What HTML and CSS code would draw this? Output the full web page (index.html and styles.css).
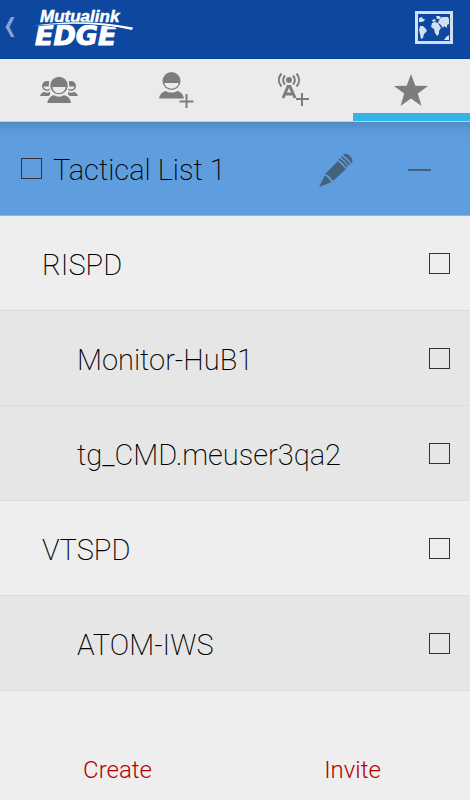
FILE: index.html
```
<!DOCTYPE html>
<html lang="en">
<head>
  <meta charset="UTF-8">
  <meta name="viewport" content="width=device-width, initial-scale=1">
  <title>Mutualink EDGE</title>
  <link rel="stylesheet" href="styles.css">
</head>
<body>

<header class="topbar">
  <button class="icon-btn back" aria-label="Back">
    <svg width="10" height="20" viewBox="0 0 10 20"><path d="M6 0h3.500L4.500 10l5 10H6L0.500 10z" fill="#86a3d1"/></svg>
  </button>
  <svg class="logo" width="106" height="50" viewBox="0 0 106 50" role="img" aria-label="Mutualink EDGE">
    <text class="logo-name" x="10" y="20">Mutualink</text>
    <text class="logo-edge" x="5" y="43">EDGE</text>
    <path class="logo-swoosh" d="M0 24.500C28 19 66 18 103 25.500L102 28C68 20.500 34 20.500 0 24.500z"/>
  </svg>
  <button class="icon-btn map-btn" aria-label="Map">
    <svg width="38" height="33" viewBox="0 0 38 33">
      <path fill="#d3def0" fill-rule="evenodd" d="M0 0h38v33H0zM3 3v27h32V3z"/>
      <g fill="#d3def0">
        <path d="M4 7l3-1 1 2 2 0-1 2-2 1H4zM5 15l3 0 3 3 1 2-3 3-1 4-2 1-1-5-1-4z"/>
        <path d="M17 9l3-1 1 2-3 1zM21 5h3l2 1-1 2h-3zM24 9l3-3h6l1 2v5l-2 1v3l-3-2-1 2-3-4-2-1z"/>
        <path d="M17 12l3-1 3 1 3 5-2 3v3l-2 2-2-3-1-4-3-2z"/>
        <path d="M34 24v5h-5l2-3z"/>
      </g>
    </svg>
  </button>
</header>

<nav class="tabs">
  <button class="tab" aria-label="Groups">
    <svg width="38" height="28" viewBox="0 0 38 28" fill="#7d7d7d">
      <g id="side">
        <circle cx="7" cy="10" r="5"/>
        <path d="M3.500 10.500h7c-.5 4-6.500 4-7 0z" fill="#ebebeb"/>
        <path d="M0 20c1-3 3-4 4-4 2 1 4 1 6 0v4z"/>
      </g>
      <use href="#side" transform="matrix(-1 0 0 1 38 0)"/>
      <path d="M6 28c1-6 4-9 8-10 3 2 7 2 10 0 4 1 8 4 8 10z" stroke="#ebebeb" stroke-width="2"/>
      <circle cx="19" cy="9.500" r="9.500" stroke="#ebebeb" stroke-width="1.500"/>
      <path d="M12.500 11h13c-.5 8-12.500 8-13 0z" fill="#ebebeb"/>
    </svg>
  </button>
  <button class="tab" aria-label="Add contact">
    <svg width="35" height="36" viewBox="0 0 35 36" fill="#7d7d7d">
      <circle cx="12.500" cy="9" r="9"/>
      <path d="M5.500 11h14c-1 7.500-13 7.500-14 0z" fill="#ebebeb"/>
      <path d="M0 26.500c1-5 4-7 7-7.500 3 2 8 2 11 0 3 .5 6 2.500 7 7.500z"/>
      <path d="M27.500 22v14M20.500 29.500h14" fill="none" stroke="#ebebeb" stroke-width="5"/>
      <path d="M27.500 22v14M20.500 29.500h14" fill="none" stroke="#7d7d7d" stroke-width="2"/>
    </svg>
  </button>
  <button class="tab" aria-label="Add radio">
    <svg width="31" height="34" viewBox="0 0 31 34" fill="none" stroke="#7d7d7d" stroke-width="2">
      <circle cx="11" cy="7" r="3" fill="#7d7d7d" stroke="none"/>
      <path d="M7 2.500c-2.500 3-2.500 6 0 9M15 2.500c2.500 3 2.500 6 0 9M3.500 0.500c-3.500 4-3.500 9 0 13M18.500 0.500c3.500 4 3.500 9 0 13"/>
      <path d="M5 25L10 13.500h2L17 25M8 21h6" stroke-width="3"/>
      <path d="M24 20v13M18 26h13"/>
    </svg>
  </button>
  <button class="tab active" aria-label="Favorites">
    <svg width="34" height="32" viewBox="0 0 34 32"><path fill="#7d7d7d" d="M17 0l4.300 11.700L34 12l-10.200 7.600L27.500 32 17 24.600 6.500 32l3.700-12.400L0 12l12.700-.3z"/></svg>
  </button>
</nav>

<main class="list">
  <div class="list-head">
    <label class="list-title"><input type="checkbox" class="check"> Tactical List 1</label>
    <button class="icon-btn edit" aria-label="Edit list">
      <svg width="34" height="34" viewBox="0 0 34 34">
        <path fill="#47617c" d="M0 34L6 22l7 7zM6 21L19 8l8 8L14 28z"/>
        <path fill="none" stroke="#47617c" stroke-width="2" d="M20 6q5 3 8 8M22.500 4q5 3 8 8"/>
        <path fill="#47617c" d="M24 2q3-3 7 1 4 4 1.500 7.500Q29 5 24 2z"/>
        <path fill="none" stroke="#5f9ede" stroke-width="1.500" d="M5 21.500q6 1 8 8"/>
      </svg>
    </button>
    <button class="icon-btn collapse" aria-label="Collapse list"><span class="minus"></span></button>
  </div>

  <label class="row">RISPD <input type="checkbox" class="check"></label>
  <label class="row child">Monitor-HuB1 <input type="checkbox" class="check"></label>
  <label class="row child">tg_CMD.meuser3qa2 <input type="checkbox" class="check"></label>
  <label class="row">VTSPD <input type="checkbox" class="check"></label>
  <label class="row child">ATOM-IWS <input type="checkbox" class="check"></label>
</main>

<footer class="actions">
  <button class="action">Create</button>
  <button class="action">Invite</button>
</footer>

</body>
</html>
```
FILE: styles.css
```
* {
  box-sizing: border-box;
}

body {
  margin: 0;
  min-height: 100vh;
  display: flex;
  flex-direction: column;
  background: #eeeeee;
  color: #000;
  font-family: Roboto, "Noto Sans", sans-serif;
  font-weight: 300;
}

button {
  margin: 0;
  padding: 0;
  border: none;
  background: none;
  font: inherit;
  cursor: pointer;
}

svg {
  display: block;
}

/* top bar */
.topbar {
  display: flex;
  align-items: center;
  height: 59px;
  padding: 0 17px 4px 5px;
  background: #0d479f;
  border-bottom: 1px solid #0a3f9c;
}

.logo {
  margin-left: 15px;
  fill: #fff;
}

.logo-name {
  font: italic bold 17px "Liberation Sans", sans-serif;
  stroke: #fff;
  stroke-width: 0.5px;
}

.logo-edge {
  font: italic bold 27px "DejaVu Sans", sans-serif;
  stroke: #fff;
  stroke-width: 1px;
}

.logo-swoosh {
  stroke: #0d479f;
  stroke-width: 1px;
  paint-order: stroke;
}

.map-btn {
  margin-left: auto;
}

/* tabs */
.tabs {
  display: grid;
  grid-template-columns: repeat(4, 1fr);
  height: 63px;
  background: #ebebeb;
  border-bottom: 1px solid #c4cdd5;
}

.tab {
  display: flex;
  align-items: center;
  justify-content: center;
  border-bottom: 8px solid transparent;
  padding-top: 8px;
}

.tab.active {
  border-bottom-color: #33b5e5;
}

/* list */
.list-head {
  display: flex;
  align-items: center;
  height: 94px;
  padding: 2px 39px 0 21px;
  background: linear-gradient(#4f8ac4, #5a98d7 8px, #5f9ede 18px);
  border-bottom: 1px solid #8db5df;
}

.list-title {
  display: flex;
  align-items: center;
  flex: 1;
  gap: 11px;
  font-size: 29px;
  font-weight: 200;
}

.check {
  appearance: none;
  flex: none;
  width: 21px;
  height: 21px;
  margin: 0 0 2px;
  border: 1px solid #333;
}

.check:checked {
  background: #333;
}

.collapse {
  padding: 12px 0;
  margin-left: 55px;
}

.minus {
  display: block;
  width: 23px;
  height: 2px;
  background: #47617c;
}

.row {
  display: flex;
  align-items: center;
  justify-content: space-between;
  height: 95px;
  padding: 3px 20px 0 42px;
  border-bottom: 1px solid #dcdcdc;
  font-size: 29px;
  font-weight: 200;
}

.row.child {
  padding-left: 77px;
  background: #e6e6e6;
}

/* bottom buttons */
.actions {
  display: grid;
  grid-template-columns: 1fr 1fr;
  flex: 1;
  align-items: end;
}

.action {
  height: 60px;
  color: #b50000;
  font-size: 24px;
}
```
